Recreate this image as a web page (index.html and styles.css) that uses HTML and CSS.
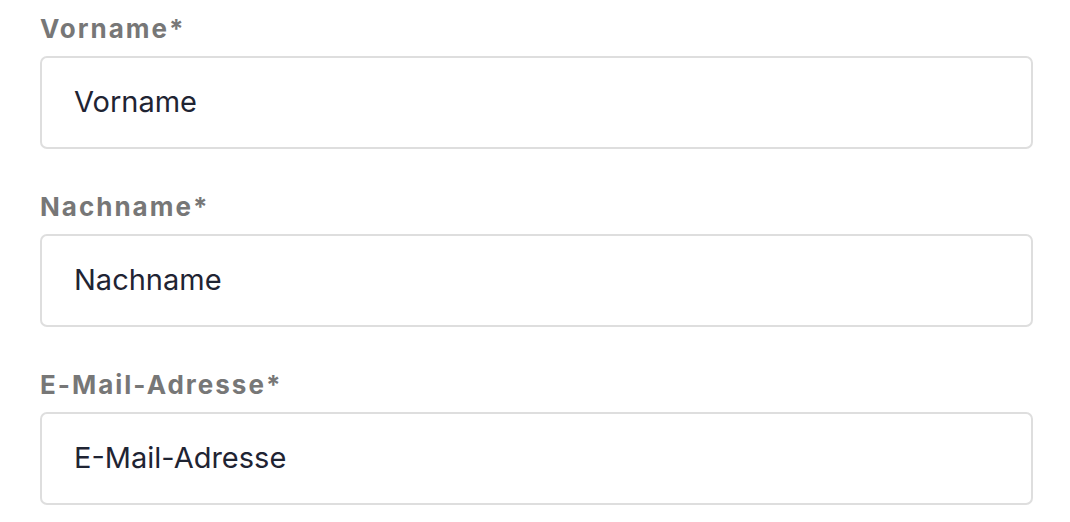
FILE: index.html
```html
<!DOCTYPE html>
<html>
<head>
    <meta charset="utf-8">
    <link rel="stylesheet" href="styles.css">
</head>
<body>
    <form class="signupform">
        <div class="field">
            <label class="fieldlabel" for="vorname">Vorname*</label>
            <input class="fieldinput" id="vorname" type="text" placeholder="Vorname">
        </div>
        <div class="field">
            <label class="fieldlabel" for="nachname">Nachname*</label>
            <input class="fieldinput" id="nachname" type="text" placeholder="Nachname">
        </div>
        <div class="field">
            <label class="fieldlabel" for="email">E-Mail-Adresse*</label>
            <input class="fieldinput" id="email" type="email" placeholder="E-Mail-Adresse">
        </div>
    </form>
</body>
</html>
```

FILE: styles.css
```css
body { margin:0; background-color:#ffffff; font-family:Inter, "Noto Sans", sans-serif; }

.signupform { padding:14px 37px 0 40px; }

.field { display:flex; flex-direction:column; margin-bottom:43px; }
.fieldlabel { font-size:26px; line-height:30px; font-weight:700; color:#777777; letter-spacing:2px; margin-bottom:12px; }
.fieldinput { box-sizing:border-box; height:93px; width:100%; border:2px solid #dedede; border-radius:7px; padding:0 32px 3px; font-family:Inter, "Noto Sans", sans-serif; font-size:29px; color:#1f2433; background:#fff; outline:0; }
.fieldinput::placeholder { color:#1f2433; opacity:1; }
```
